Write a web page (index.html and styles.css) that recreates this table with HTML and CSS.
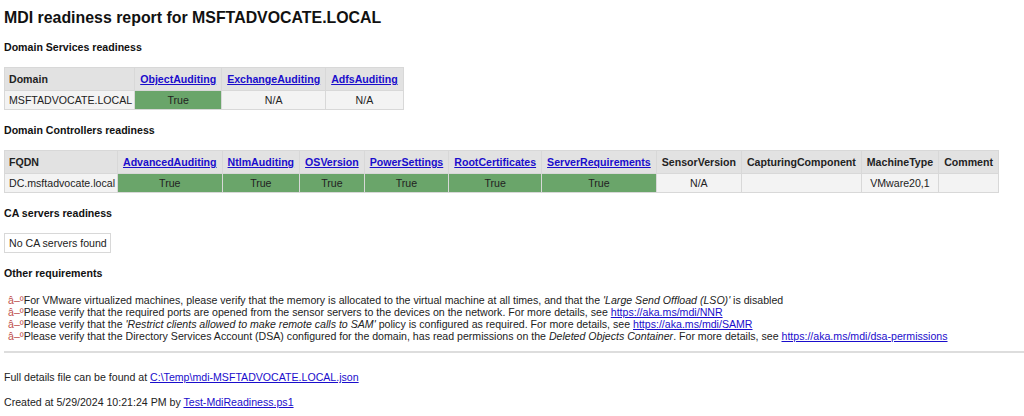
FILE: index.html
```html
<!DOCTYPE html>
<html>
<head>
<meta charset="utf-8">
<link rel="stylesheet" href="styles.css">
</head>
<body>
<h1 class="title">MDI readiness report for MSFTADVOCATE.LOCAL</h1>

<h2 class="section">Domain Services readiness</h2>
<table class="grid">
  <tr>
    <th class="left">Domain</th>
    <th><a href="#">ObjectAuditing</a></th>
    <th><a href="#">ExchangeAuditing</a></th>
    <th><a href="#">AdfsAuditing</a></th>
  </tr>
  <tr>
    <td class="left">MSFTADVOCATE.LOCAL</td>
    <td class="ok">True</td>
    <td>N/A</td>
    <td>N/A</td>
  </tr>
</table>

<h2 class="section">Domain Controllers readiness</h2>
<table class="grid">
  <tr>
    <th class="left">FQDN</th>
    <th><a href="#">AdvancedAuditing</a></th>
    <th><a href="#">NtlmAuditing</a></th>
    <th><a href="#">OSVersion</a></th>
    <th><a href="#">PowerSettings</a></th>
    <th><a href="#">RootCertificates</a></th>
    <th><a href="#">ServerRequirements</a></th>
    <th>SensorVersion</th>
    <th>CapturingComponent</th>
    <th>MachineType</th>
    <th>Comment</th>
  </tr>
  <tr>
    <td class="left">DC.msftadvocate.local</td>
    <td class="ok">True</td>
    <td class="ok">True</td>
    <td class="ok">True</td>
    <td class="ok">True</td>
    <td class="ok">True</td>
    <td class="ok">True</td>
    <td>N/A</td>
    <td></td>
    <td>VMware20,1</td>
    <td></td>
  </tr>
</table>

<h2 class="section">CA servers readiness</h2>
<table class="grid">
  <tr><td class="left plain">No CA servers found</td></tr>
</table>

<h2 class="section">Other requirements</h2>
<ul class="reqs">
  <li><span class="mark">â–º</span>For VMware virtualized machines, please verify that the memory is allocated to the virtual machine at all times, and that the <i>'Large Send Offload (LSO)'</i> is disabled</li>
  <li><span class="mark">â–º</span>Please verify that the required ports are opened from the sensor servers to the devices on the network. For more details, see <a href="#">https://aka.ms/mdi/NNR</a></li>
  <li><span class="mark">â–º</span>Please verify that the <i>'Restrict clients allowed to make remote calls to SAM'</i> policy is configured as required. For more details, see <a href="#">https://aka.ms/mdi/SAMR</a></li>
  <li><span class="mark">â–º</span>Please verify that the Directory Services Account (DSA) configured for the domain, has read permissions on the <i>Deleted Objects Container</i>. For more details, see <a href="#">https://aka.ms/mdi/dsa-permissions</a></li>
</ul>

<hr class="rule">

<p class="foot">Full details file can be found at <a href="#">C:\Temp\mdi-MSFTADVOCATE.LOCAL.json</a></p>
<p class="foot">Created at 5/29/2024 10:21:24 PM by <a href="#">Test-MdiReadiness.ps1</a></p>
</body>
</html>
```

FILE: styles.css
```css
html, body {
  margin: 0;
  padding: 0;
  background: #fff;
}
body {
  padding: 0 4px;
  font-family: "Liberation Sans", Arial, sans-serif;
  font-size: 10.6px;
  color: #222;
}
a {
  color: #1a0dcc;
  text-decoration: underline;
}
.title {
  font-size: 15.9px;
  font-weight: bold;
  margin: 8px 0 0 0;
  line-height: 20px;
  color: #111;
}
.section {
  font-size: 10.6px;
  font-weight: bold;
  margin: 0;
  padding-top: 13px;
  line-height: 14px;
  height: 14px;
  color: #111;
}
.title + .section {
  padding-top: 12px;
}
.grid {
  border-collapse: collapse;
  margin-top: 13px;
  font-size: 10.6px;
}
.grid th, .grid td {
  border: 1px solid #d8d8d8;
  padding: 0 5px;
  text-align: center;
  white-space: nowrap;
}
.grid th {
  background: #e2e2e2;
  height: 22px;
  font-weight: bold;
  color: #222;
}
.grid td {
  background: #f3f3f3;
  height: 18px;
  color: #222;
}
.grid .left {
  text-align: left;
  padding-left: 4px;
  padding-right: 2px;
}
.grid td.ok {
  background: #6aa56a;
}
.grid td.plain {
  background: #fff;
  padding-right: 3px;
}
.reqs {
  list-style: none;
  margin: 14px 0 0 0;
  padding: 0 0 0 4px;
  line-height: 12px;
}
.mark {
  color: #c0504d;
}
.rule {
  border: 0;
  border-top: 2px solid #ddd;
  margin: 9px -4px 0 0;
}
.foot {
  margin: 17px 0 0 0;
  line-height: 14px;
}
.foot + .foot {
  margin-top: 11px;
}
```
